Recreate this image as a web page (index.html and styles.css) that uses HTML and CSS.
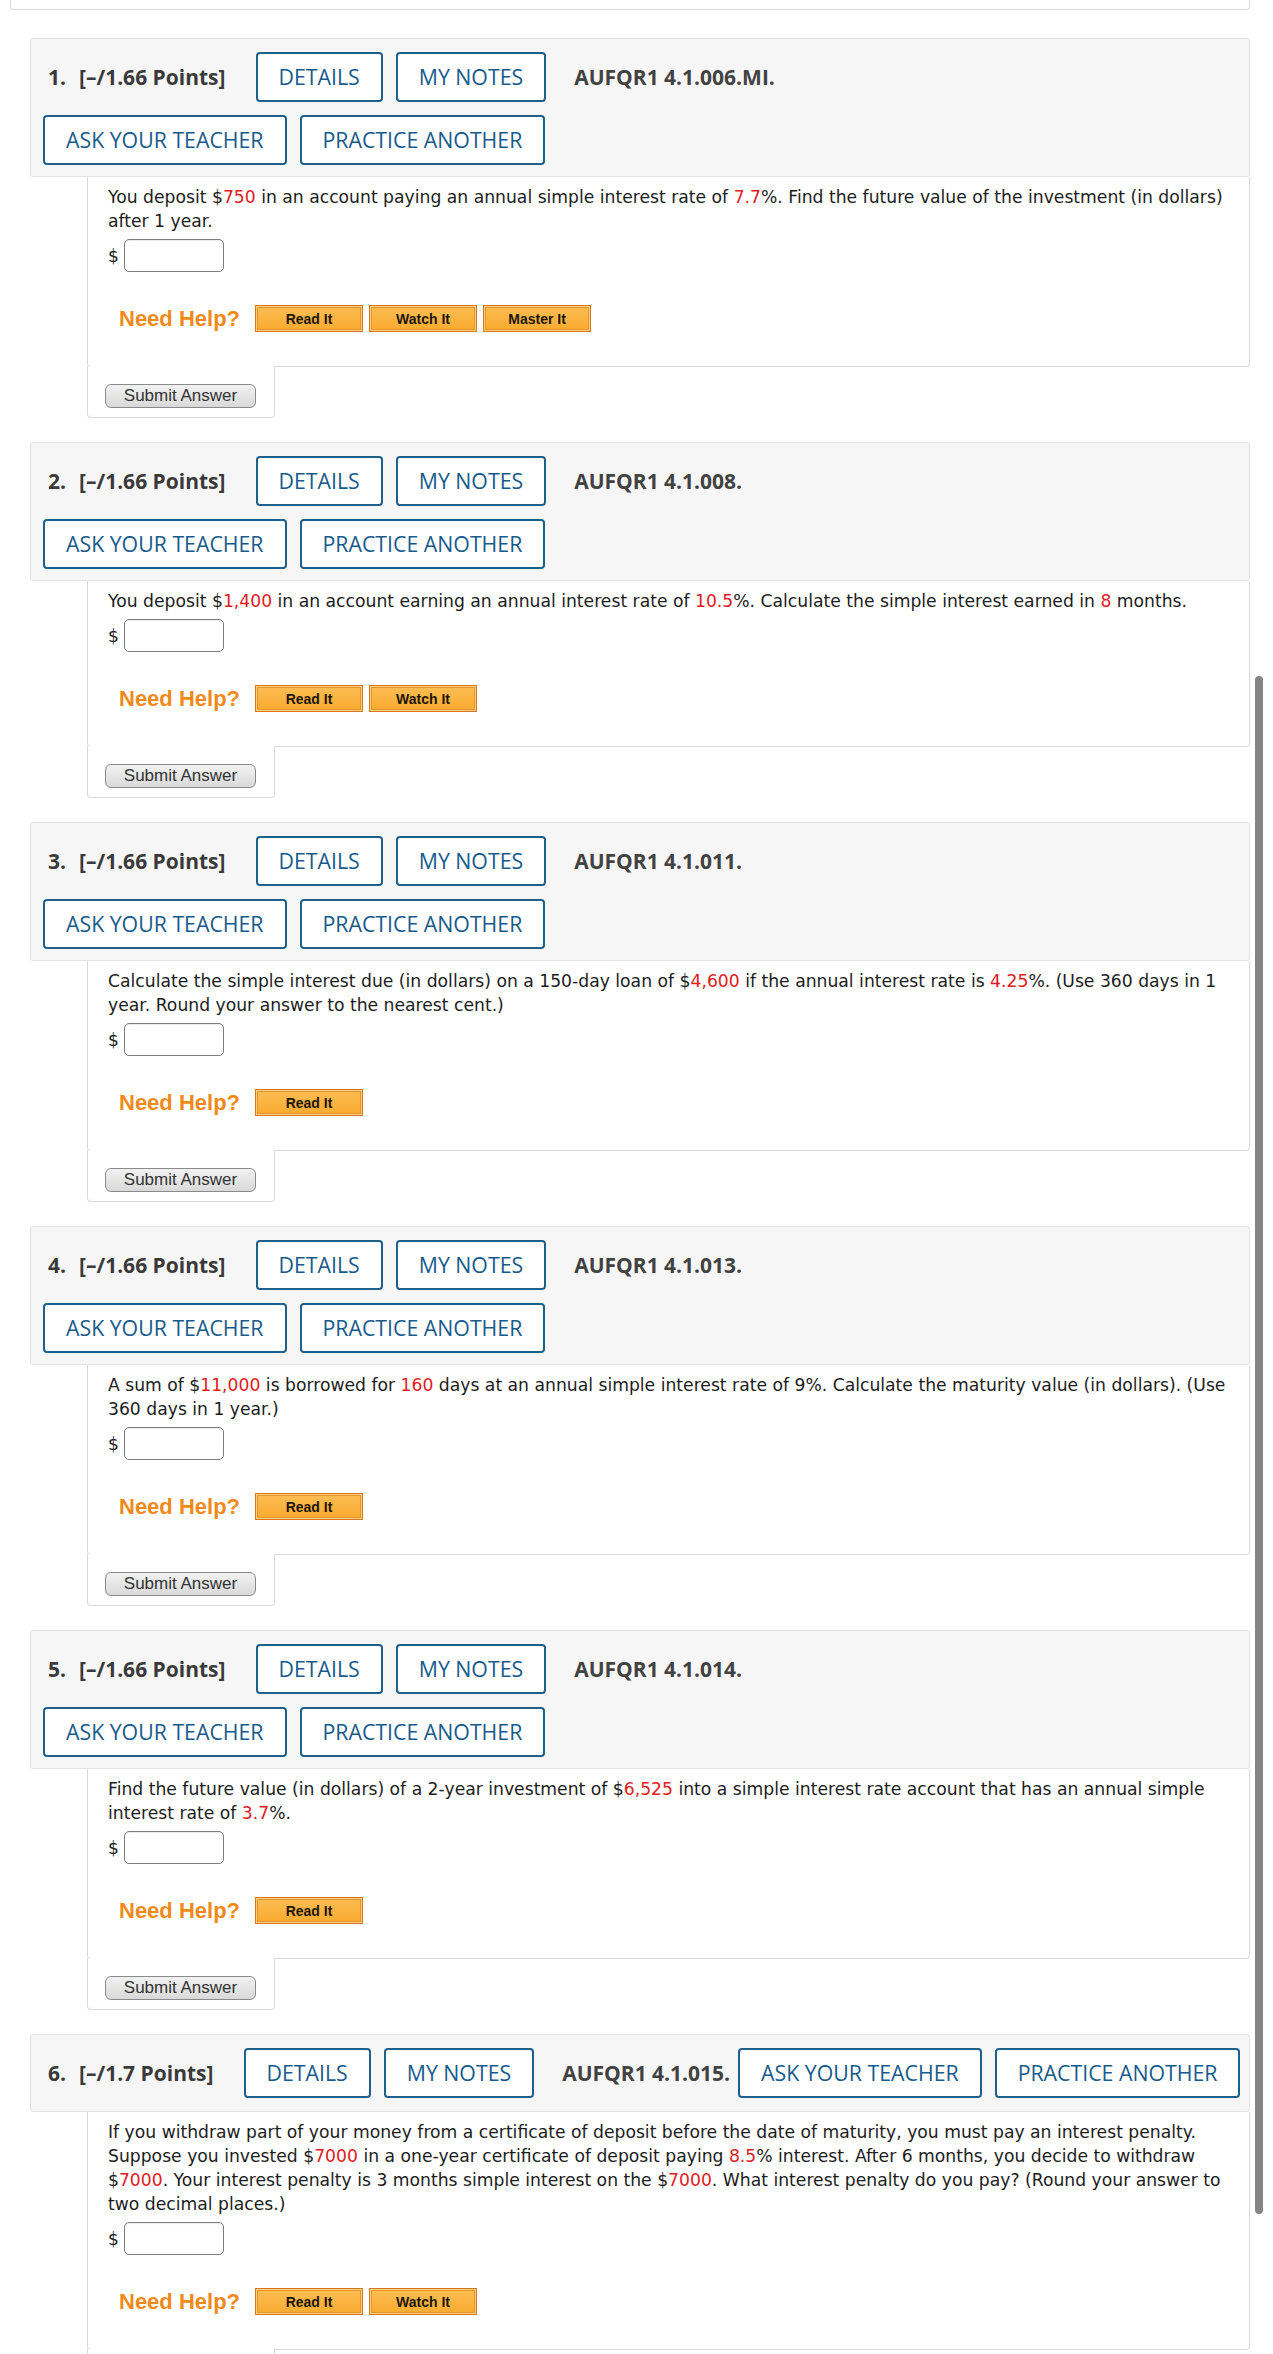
FILE: index.html
```html
<!DOCTYPE html>
<html lang="en">
<head>
<meta charset="utf-8">
<title>AUFQR1 4.1 Assignment</title>
<link rel="stylesheet" href="styles.css">
</head>
<body>
<div class="topbar"></div>

<section class="q">
  <div class="qhead">
    <div class="hrow">
      <span class="qtitle"><span class="qnum">1.</span>[–/1.66 Points]</span>
      <a class="btn">DETAILS</a>
      <a class="btn">MY NOTES</a>
      <span class="qcode">AUFQR1 4.1.006.MI.</span>
    </div>
    <div class="hrow">
      <a class="btn">ASK YOUR TEACHER</a>
      <a class="btn">PRACTICE ANOTHER</a>
    </div>
  </div>
  <div class="qbody">
    <p class="qtext">You deposit $<span class="r">750</span> in an account paying an annual simple interest rate of <span class="r">7.7</span>%. Find the future value of the investment (in dollars) after 1 year.</p>
    <div class="answer"><span class="cur">$</span><input class="field" type="text"></div>
    <div class="help"><span class="need">Need Help?</span><button class="hbtn">Read It</button><button class="hbtn">Watch It</button><button class="hbtn">Master It</button></div>
  </div>
  <div class="qfoot"><button class="submit">Submit Answer</button></div>
</section>

<section class="q">
  <div class="qhead">
    <div class="hrow">
      <span class="qtitle"><span class="qnum">2.</span>[–/1.66 Points]</span>
      <a class="btn">DETAILS</a>
      <a class="btn">MY NOTES</a>
      <span class="qcode">AUFQR1 4.1.008.</span>
    </div>
    <div class="hrow">
      <a class="btn">ASK YOUR TEACHER</a>
      <a class="btn">PRACTICE ANOTHER</a>
    </div>
  </div>
  <div class="qbody">
    <p class="qtext">You deposit $<span class="r">1,400</span> in an account earning an annual interest rate of <span class="r">10.5</span>%. Calculate the simple interest earned in <span class="r">8</span> months.</p>
    <div class="answer"><span class="cur">$</span><input class="field" type="text"></div>
    <div class="help"><span class="need">Need Help?</span><button class="hbtn">Read It</button><button class="hbtn">Watch It</button></div>
  </div>
  <div class="qfoot"><button class="submit">Submit Answer</button></div>
</section>

<section class="q">
  <div class="qhead">
    <div class="hrow">
      <span class="qtitle"><span class="qnum">3.</span>[–/1.66 Points]</span>
      <a class="btn">DETAILS</a>
      <a class="btn">MY NOTES</a>
      <span class="qcode">AUFQR1 4.1.011.</span>
    </div>
    <div class="hrow">
      <a class="btn">ASK YOUR TEACHER</a>
      <a class="btn">PRACTICE ANOTHER</a>
    </div>
  </div>
  <div class="qbody">
    <p class="qtext">Calculate the simple interest due (in dollars) on a 150-day loan of $<span class="r">4,600</span> if the annual interest rate is <span class="r">4.25</span>%. (Use 360 days in 1 year. Round your answer to the nearest cent.)</p>
    <div class="answer"><span class="cur">$</span><input class="field" type="text"></div>
    <div class="help"><span class="need">Need Help?</span><button class="hbtn">Read It</button></div>
  </div>
  <div class="qfoot"><button class="submit">Submit Answer</button></div>
</section>

<section class="q">
  <div class="qhead">
    <div class="hrow">
      <span class="qtitle"><span class="qnum">4.</span>[–/1.66 Points]</span>
      <a class="btn">DETAILS</a>
      <a class="btn">MY NOTES</a>
      <span class="qcode">AUFQR1 4.1.013.</span>
    </div>
    <div class="hrow">
      <a class="btn">ASK YOUR TEACHER</a>
      <a class="btn">PRACTICE ANOTHER</a>
    </div>
  </div>
  <div class="qbody">
    <p class="qtext">A sum of $<span class="r">11,000</span> is borrowed for <span class="r">160</span> days at an annual simple interest rate of 9%. Calculate the maturity value (in dollars). (Use 360 days in 1 year.)</p>
    <div class="answer"><span class="cur">$</span><input class="field" type="text"></div>
    <div class="help"><span class="need">Need Help?</span><button class="hbtn">Read It</button></div>
  </div>
  <div class="qfoot"><button class="submit">Submit Answer</button></div>
</section>

<section class="q">
  <div class="qhead">
    <div class="hrow">
      <span class="qtitle"><span class="qnum">5.</span>[–/1.66 Points]</span>
      <a class="btn">DETAILS</a>
      <a class="btn">MY NOTES</a>
      <span class="qcode">AUFQR1 4.1.014.</span>
    </div>
    <div class="hrow">
      <a class="btn">ASK YOUR TEACHER</a>
      <a class="btn">PRACTICE ANOTHER</a>
    </div>
  </div>
  <div class="qbody">
    <p class="qtext">Find the future value (in dollars) of a 2-year investment of $<span class="r">6,525</span> into a simple interest rate account that has an annual simple interest rate of <span class="r">3.7</span>%.</p>
    <div class="answer"><span class="cur">$</span><input class="field" type="text"></div>
    <div class="help"><span class="need">Need Help?</span><button class="hbtn">Read It</button></div>
  </div>
  <div class="qfoot"><button class="submit">Submit Answer</button></div>
</section>

<section class="q">
  <div class="qhead single">
    <div class="hrow">
      <span class="qtitle"><span class="qnum">6.</span>[–/1.7 Points]</span>
      <a class="btn">DETAILS</a>
      <a class="btn">MY NOTES</a>
      <span class="qcode tight">AUFQR1 4.1.015.</span>
      <a class="btn">ASK YOUR TEACHER</a>
      <a class="btn">PRACTICE ANOTHER</a>
    </div>
  </div>
  <div class="qbody">
    <p class="qtext">If you withdraw part of your money from a certificate of deposit before the date of maturity, you must pay an interest penalty. Suppose you invested $<span class="r">7000</span> in a one-year certificate of deposit paying <span class="r">8.5</span>% interest. After 6 months, you decide to withdraw $<span class="r">7000</span>. Your interest penalty is 3 months simple interest on the $<span class="r">7000</span>. What interest penalty do you pay? (Round your answer to two decimal places.)</p>
    <div class="answer"><span class="cur">$</span><input class="field" type="text"></div>
    <div class="help"><span class="need">Need Help?</span><button class="hbtn">Read It</button><button class="hbtn">Watch It</button></div>
  </div>
  <div class="qfoot"><button class="submit">Submit Answer</button></div>
</section>

<div class="scroll-thumb"></div>
</body>
</html>
```

FILE: styles.css
```css
html, body {
  margin: 0;
  padding: 0;
  background: #ffffff;
}

body {
  position: relative;
  font-family: "DejaVu Sans", Verdana, sans-serif;
  color: #1c1c1c;
  height: 2354px;
  overflow: hidden;
}

.topbar {
  height: 9px;
  margin-left: 10px;
  width: 1238px;
  border: 1px solid #dcdcdc;
  border-top: 0;
  border-radius: 0 0 3px 3px;
  margin-bottom: 28px;
}

.q {
  margin-left: 30px;
  width: 1220px;
  margin-bottom: 24px;
}

/* ---------- header ---------- */
.qhead {
  background: #f6f6f6;
  border: 1px solid #e2e2e2;
  border-radius: 3px;
  padding: 13px 12px 11px 12px;
  display: flex;
  flex-direction: column;
  gap: 13px;
  font-family: "Open Sans", "Noto Sans", sans-serif;
}

.qhead.single {
  padding-bottom: 13px;
}

.hrow {
  display: flex;
  align-items: center;
  gap: 13px;
  flex-wrap: nowrap;
}

.qtitle {
  font-weight: 700;
  font-size: 21px;
  color: #3a3a3a;
  margin: 0 17px 0 5px;
  white-space: nowrap;
}

.qnum {
  margin-right: 13px;
}

.qcode {
  font-weight: 700;
  font-size: 21px;
  color: #424242;
  margin-left: 15px;
  white-space: nowrap;
}

.qcode.tight {
  margin-right: -5px;
}

.btn {
  display: inline-block;
  box-sizing: border-box;
  height: 50px;
  line-height: 46px;
  padding: 0 21px;
  border: 2px solid #1f5f8c;
  border-radius: 4px;
  background: #ffffff;
  color: #175a8c;
  font-size: 21.3px;
  font-weight: 500;
  white-space: nowrap;
  cursor: pointer;
}

/* ---------- body ---------- */
.qbody {
  margin-left: 57px;
  border: 1px solid #d9d9d9;
  border-top: 0;
  border-radius: 0 0 4px 4px;
  padding: 8px 2px 34px 20px;
}

.qtext {
  margin: 0;
  font-size: 17.2px;
  line-height: 24px;
}

.r {
  color: #e0201e;
}

.answer {
  display: flex;
  align-items: center;
  gap: 5px;
  margin-top: 6px;
  height: 33px;
  font-size: 17px;
}

.field {
  box-sizing: border-box;
  width: 100px;
  height: 33px;
  border: 1px solid #7d7d7d;
  border-radius: 5px;
  background: #ffffff;
  margin: 0;
  padding: 0 6px;
  box-shadow: inset 0 1px 1px rgba(0, 0, 0, 0.08);
}

.help {
  display: flex;
  align-items: center;
  gap: 6px;
  margin-top: 33px;
  margin-left: 11px;
  height: 27px;
}

.need {
  font-family: "Liberation Sans", Arial, sans-serif;
  font-weight: 700;
  font-size: 22px;
  color: #f18a1b;
  margin-right: 9px;
}

.hbtn {
  box-sizing: border-box;
  width: 108px;
  height: 27px;
  margin: 0;
  padding: 0;
  border: 1px solid #d5781f;
  box-shadow: inset 0 0 0 1px #fcd07a, inset 0 0 0 2px #e8932c;
  background: linear-gradient(#fdbe55, #f9aa2e);
  font-family: "Liberation Sans", Arial, sans-serif;
  font-weight: 700;
  font-size: 14px;
  color: #1b1608;
  cursor: pointer;
}

/* ---------- footer ---------- */
.qfoot {
  position: relative;
  margin-left: 57px;
  margin-top: -1px;
  width: 188px;
  box-sizing: border-box;
  background: #ffffff;
  border: 1px solid #d9d9d9;
  border-top: 0;
  border-radius: 0 0 4px 4px;
  padding: 18px 0 9px 17px;
}

.submit {
  display: block;
  box-sizing: border-box;
  width: 151px;
  height: 24px;
  margin: 0;
  padding: 0;
  border: 1px solid #8a8a8a;
  border-radius: 6px;
  background: linear-gradient(#f2f2f2, #d9d9d9);
  font-family: "Liberation Sans", Arial, sans-serif;
  font-size: 17px;
  line-height: 22px;
  color: #333333;
  cursor: pointer;
}

/* overlay scrollbar thumb */
.scroll-thumb {
  position: absolute;
  left: 1255px;
  top: 676px;
  width: 8px;
  height: 1538px;
  border-radius: 4px;
  background: #858585;
}
```
